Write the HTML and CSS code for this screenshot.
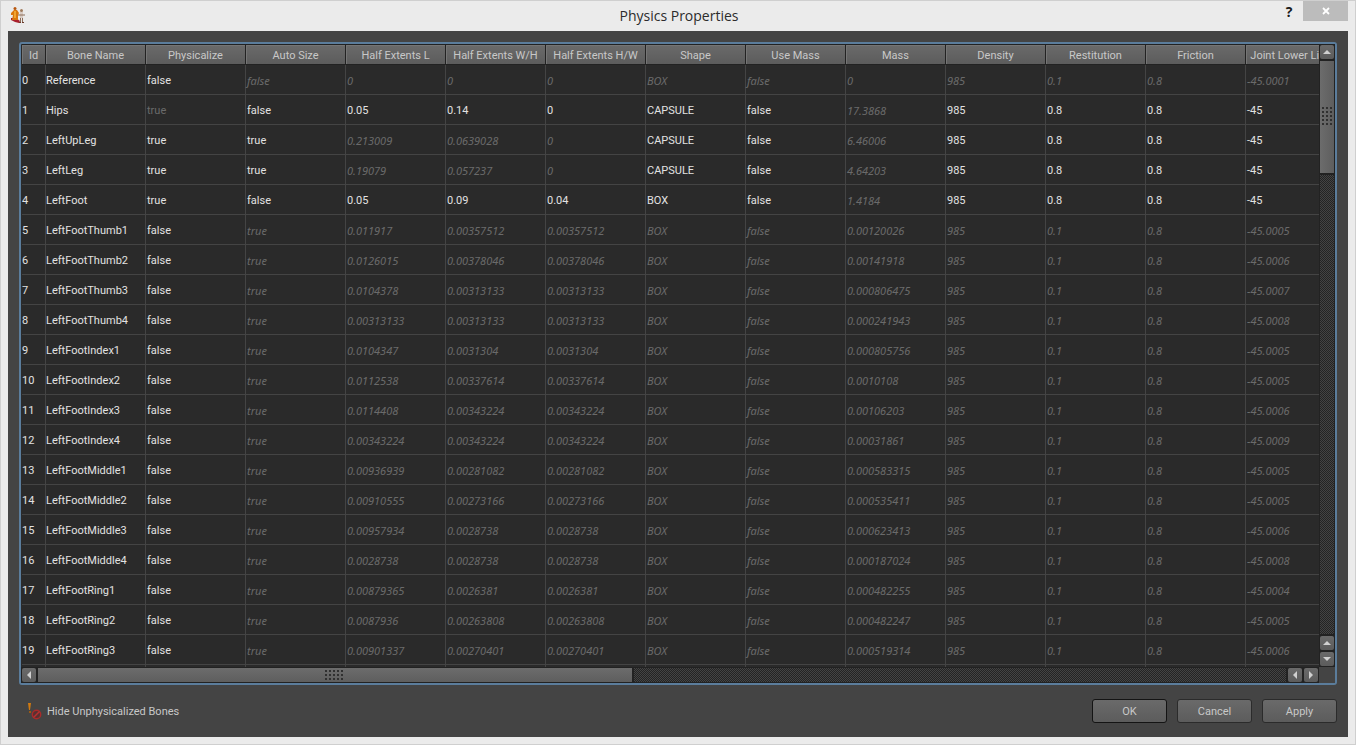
FILE: index.html
```
<!DOCTYPE html>
<html lang="en">
<head>
    <meta charset="UTF-8">
    <meta name="viewport" content="width=device-width, initial-scale=1.0">
    <title>Physics Properties</title>
    <link rel="stylesheet" href="styles.css">
</head>
<body>
    <div class="window">
        <header class="titlebar">
            <svg class="app-icon" width="16" height="16" viewBox="0 0 16 16" aria-hidden="true">
                <path d="M1 11l5 0 4 3-1 2-4-1-4-2z" fill="#a8202c"/>
                <path d="M4 3L1 6v2h2l-1 5h6V8l1-2-2-3z" fill="#d9780f"/>
                <circle cx="5" cy="1.5" r="1.5" fill="#b8560d"/>
                <path d="M4 4h2v7H4z" fill="#f0a632"/>
                <circle cx="11.5" cy="3.5" r="1.5" fill="#a07a5c"/>
                <path d="M10 5h3v6h-3z" fill="#d8ccc4"/>
                <path d="M8 8h2M13 8h2M10.500 11v4M12.500 11v4M10 8h3" fill="none" stroke="#8c6c58"/>
                <path d="M9 15.500h2M12 15.500h2" stroke="#6b3a2c"/>
            </svg>
            <h1>Physics Properties</h1>
            <div class="window-buttons">
                <button class="help-btn" aria-label="Help">?</button>
                <button class="close-btn" aria-label="Close">
                    <svg width="8" height="8" viewBox="0 0 8 8"><path d="M1 1l6 6M7 1l-6 6" stroke="#fff" stroke-width="1.800"/></svg>
                </button>
            </div>
        </header>

        <main>
            <div class="frame">
                <div class="viewport">
                    <table>
                        <colgroup><col class="col-id"></colgroup>
                        <thead>
                            <tr>
                                <th>Id</th>
                                <th>Bone Name</th>
                                <th>Physicalize</th>
                                <th>Auto Size</th>
                                <th>Half Extents L</th>
                                <th>Half Extents W/H</th>
                                <th>Half Extents H/W</th>
                                <th>Shape</th>
                                <th>Use Mass</th>
                                <th>Mass</th>
                                <th>Density</th>
                                <th>Restitution</th>
                                <th>Friction</th>
                                <th>Joint Lower Limits</th>
                            </tr>
                        </thead>
                        <tbody id="bones"></tbody>
                    </table>
                </div>
                <div class="scrollbar vertical">
                    <button aria-label="Scroll up"><svg width="8" height="4" viewBox="0 0 8 4"><path d="M0 4l4-4 4 4z"/></svg></button>
                    <div class="thumb"><span class="grip"></span></div>
                    <div class="track"></div>
                    <button aria-label="Page up"><svg width="8" height="4" viewBox="0 0 8 4"><path d="M0 4l4-4 4 4z"/></svg></button>
                    <button aria-label="Scroll down"><svg width="8" height="4" viewBox="0 0 8 4"><path d="M0 0l4 4 4-4z"/></svg></button>
                </div>
                <div class="scrollbar horizontal">
                    <button aria-label="Scroll left"><svg width="4" height="8" viewBox="0 0 4 8"><path d="M4 0L0 4l4 4z"/></svg></button>
                    <div class="thumb"><span class="grip"></span></div>
                    <div class="track"></div>
                    <button aria-label="Page left"><svg width="4" height="8" viewBox="0 0 4 8"><path d="M4 0L0 4l4 4z"/></svg></button>
                    <button aria-label="Scroll right"><svg width="4" height="8" viewBox="0 0 4 8"><path d="M0 0l4 4-4 4z"/></svg></button>
                </div>
                <div class="corner"></div>
            </div>

            <footer>
                <button class="hide-btn">
                    <svg width="16" height="20" viewBox="0 0 16 20" aria-hidden="true">
                        <path d="M1 2h3L3 9H2z" fill="#d07a10"/>
                        <path d="M2 10h2v2H2z" fill="#9a5a14"/>
                        <circle cx="9.500" cy="13.500" r="4.200" fill="#5a3030" stroke="#a82a2a" stroke-width="1.400"/>
                        <path d="M6.500 16.500l6-6" stroke="#b83030" stroke-width="1.400"/>
                    </svg>
                    Hide Unphysicalized Bones
                </button>
                <div class="actions">
                    <button class="default">OK</button>
                    <button>Cancel</button>
                    <button>Apply</button>
                </div>
            </footer>
        </main>
    </div>

    <script>
        // name, physicalize, auto size, extents L, W/H, H/W, mass, joint lower limit
        const bones = [
            ["Reference", "false", "false", "0", "0", "0", "0", "-45.0001"],
            ["LeftFootThumb1", "false", "true", "0.011917", "0.00357512", "0.00357512", "0.00120026", "-45.0005"],
            ["LeftFootThumb2", "false", "true", "0.0126015", "0.00378046", "0.00378046", "0.00141918", "-45.0006"],
            ["LeftFootThumb3", "false", "true", "0.0104378", "0.00313133", "0.00313133", "0.000806475", "-45.0007"],
            ["LeftFootThumb4", "false", "true", "0.00313133", "0.00313133", "0.00313133", "0.000241943", "-45.0008"],
            ["LeftFootIndex1", "false", "true", "0.0104347", "0.0031304", "0.0031304", "0.000805756", "-45.0005"],
            ["LeftFootIndex2", "false", "true", "0.0112538", "0.00337614", "0.00337614", "0.0010108", "-45.0005"],
            ["LeftFootIndex3", "false", "true", "0.0114408", "0.00343224", "0.00343224", "0.00106203", "-45.0006"],
            ["LeftFootIndex4", "false", "true", "0.00343224", "0.00343224", "0.00343224", "0.00031861", "-45.0009"],
            ["LeftFootMiddle1", "false", "true", "0.00936939", "0.00281082", "0.00281082", "0.000583315", "-45.0005"],
            ["LeftFootMiddle2", "false", "true", "0.00910555", "0.00273166", "0.00273166", "0.000535411", "-45.0005"],
            ["LeftFootMiddle3", "false", "true", "0.00957934", "0.0028738", "0.0028738", "0.000623413", "-45.0006"],
            ["LeftFootMiddle4", "false", "true", "0.0028738", "0.0028738", "0.0028738", "0.000187024", "-45.0008"],
            ["LeftFootRing1", "false", "true", "0.00879365", "0.0026381", "0.0026381", "0.000482255", "-45.0004"],
            ["LeftFootRing2", "false", "true", "0.0087936", "0.00263808", "0.00263808", "0.000482247", "-45.0005"],
            ["LeftFootRing3", "false", "true", "0.00901337", "0.00270401", "0.00270401", "0.000519314", "-45.0006"]
        ].map(([name, phys, auto, l, wh, hw, mass, limit]) => ({
            cells: [name, phys, auto, l, wh, hw, "BOX", "false", mass, "985", "0.1", "0.8", limit],
            inherited: [2, 3, 4, 5, 6, 7, 8, 9, 10, 11, 12]
        }));

        // physicalized bones sit right after the reference bone
        bones.splice(1, 0,
            { cells: ["Hips", "true", "false", "0.05", "0.14", "0", "CAPSULE", "false", "17.3868", "985", "0.8", "0.8", "-45"], dimmed: [1], inherited: [8] },
            { cells: ["LeftUpLeg", "true", "true", "0.213009", "0.0639028", "0", "CAPSULE", "false", "6.46006", "985", "0.8", "0.8", "-45"], inherited: [3, 4, 5, 8] },
            { cells: ["LeftLeg", "true", "true", "0.19079", "0.057237", "0", "CAPSULE", "false", "4.64203", "985", "0.8", "0.8", "-45"], inherited: [3, 4, 5, 8] },
            { cells: ["LeftFoot", "true", "false", "0.05", "0.09", "0.04", "BOX", "false", "1.4184", "985", "0.8", "0.8", "-45"], inherited: [8] }
        );

        const body = document.getElementById("bones");
        bones.forEach((bone, id) => {
            const row = body.insertRow();
            row.insertCell().textContent = id;
            bone.cells.forEach((value, i) => {
                const cell = row.insertCell();
                cell.textContent = value;
                if (bone.inherited.includes(i)) cell.className = "inherited";
                if (bone.dimmed && bone.dimmed.includes(i)) cell.className = "dimmed";
            });
        });
        // empty row that runs under the bottom edge
        const last = body.insertRow();
        for (let i = 0; i < 14; i++) last.insertCell();
    </script>
</body>
</html>
```
FILE: styles.css
```
:root {
    --chrome: #ebebeb;
    --panel: #444444;
    --view: #2a2a2a;
    --line: #444444;
    --text: #c8c8c8;
    --bright: #e2e2e2;
    --dim: #6a6a6a;
    --focus: #5b7d9c;
    --raised: linear-gradient(#6a6a6a, #5c5c5c);
}

* {
    margin: 0;
    padding: 0;
    box-sizing: border-box;
}

body {
    font-family: Roboto, "Noto Sans", sans-serif;
    font-size: 11px;
    color: var(--text);
}

button {
    font: inherit;
    color: inherit;
    border: none;
    background: none;
}

.window {
    display: flex;
    flex-direction: column;
    height: 100vh;
    padding: 0 7px 7px;
    border: 1px solid #cfcfcf;
    background: var(--chrome);
}

.titlebar {
    display: grid;
    grid-template-columns: 1fr auto 1fr;
    align-items: center;
    height: 30px;
    padding: 0 0 2px 2px;
}

.titlebar h1 {
    font-family: "Open Sans", sans-serif;
    font-size: 14px;
    font-weight: 400;
    color: #2b2b2b;
}

.window-buttons {
    display: flex;
    justify-content: flex-end;
    align-self: start;
}

.help-btn {
    width: 28px;
    height: 20px;
    font-family: "Open Sans", sans-serif;
    font-size: 14px;
    font-weight: 700;
    color: #1a1a1a;
}

.close-btn {
    width: 45px;
    height: 20px;
    background: #bcbcbc;
}

main {
    display: flex;
    flex: 1;
    flex-direction: column;
    min-height: 0;
    padding: 11px 11px 14px;
    background: var(--panel);
}

.frame {
    display: grid;
    flex: 1;
    grid-template-columns: minmax(0, 1fr) 16px;
    grid-template-rows: minmax(0, 1fr) 16px;
    min-height: 0;
    border: 2px solid var(--focus);
    border-radius: 3px;
    background: var(--view);
}

.viewport {
    overflow: hidden;
    padding-left: 1px;
}

/* table */
table {
    width: 1324px;
    table-layout: fixed;
    border-collapse: separate;
    border-spacing: 0;
}

.col-id {
    width: 24px;
}

th {
    height: 21px;
    padding-top: 1px;
    border: solid #222;
    border-width: 1px 1px 1px 0;
    background: var(--raised);
    box-shadow: inset 1px 1px #757575;
    font-weight: 400;
    white-space: nowrap;
}

td {
    height: 30px;
    padding-top: 2px;
    border: solid var(--line);
    border-width: 0 1px 1px 0;
    color: var(--bright);
    white-space: nowrap;
}

td:nth-child(n+3) {
    padding-left: 1px;
}

td.dimmed,
td.inherited {
    color: var(--dim);
}

td.inherited {
    font-family: "Noto Sans", sans-serif;
    font-style: italic;
}

/* scrollbars */
.scrollbar {
    display: flex;
    gap: 2px;
    padding: 1px;
    background: #222;
}

.scrollbar.vertical {
    flex-direction: column;
}

.scrollbar button {
    display: flex;
    flex: none;
    align-items: center;
    justify-content: center;
    width: 14px;
    height: 14px;
    border-radius: 2px;
    background: var(--raised);
    fill: #d0d0d0;
}

.thumb {
    display: flex;
    align-items: center;
    justify-content: center;
    background: linear-gradient(#6c6c6c, #5e5e5e);
}

.vertical .thumb {
    height: 18%;
    background: linear-gradient(90deg, #6c6c6c, #5e5e5e);
}

.horizontal .thumb {
    width: 45.8%;
}

.track {
    flex: 1;
    background: repeating-conic-gradient(#242424 0 25%, #444 0 50%) 0 0 / 2px 2px;
}

.grip {
    background: conic-gradient(transparent 75%, #303030 0) 0 0 / 4px 4px;
}

.vertical .grip {
    width: 11px;
    height: 19px;
}

.horizontal .grip {
    width: 19px;
    height: 11px;
}

.corner {
    background: var(--panel);
}

/* bottom bar */
footer {
    display: flex;
    align-items: center;
    justify-content: space-between;
    padding-top: 14px;
}

.hide-btn {
    display: flex;
    align-items: center;
    gap: 4px;
    padding-left: 8px;
}

.actions {
    display: flex;
    gap: 10px;
}

.actions button {
    width: 75px;
    height: 24px;
    border: 1px solid #2b2b2b;
    border-radius: 3px;
    background: var(--raised);
}

.actions .default {
    border-color: #141414;
}
```
